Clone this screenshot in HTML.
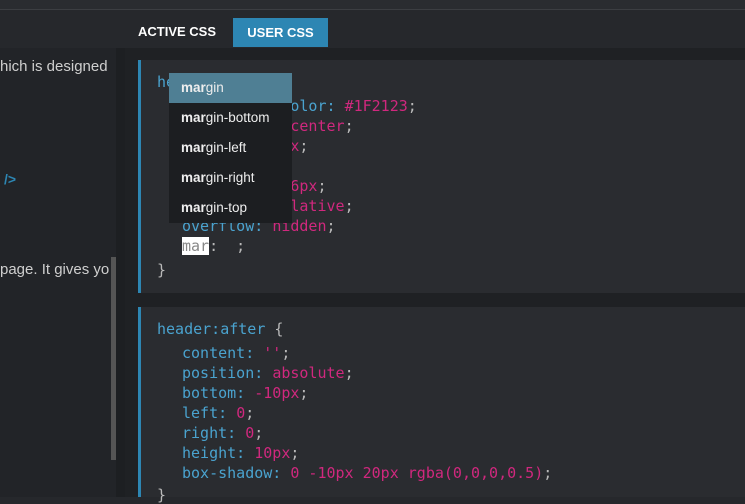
<!DOCTYPE html>
<html><head><meta charset="utf-8"><style>
*{margin:0;padding:0;box-sizing:border-box}
body{width:745px;height:497px;overflow:hidden;background:#26282c;position:relative;font-family:"Liberation Sans",sans-serif}
.a{position:absolute}
.code{font-family:"DejaVu Sans Mono","Liberation Mono",monospace;font-size:15px;white-space:pre;color:#4aa3cf;letter-spacing:0}
.code span.v{color:#d0287e}
.code span.p{color:#b9b9b9}
.dd div{height:30px;line-height:30px;padding-left:12px;color:#eee;font-size:13.5px}
.dd b{font-weight:bold}
</style></head><body>
<div class="a" style="left:0;top:0;width:745px;height:9px;background:#2a2c30"></div>
<div class="a" style="left:0;top:9px;width:745px;height:1px;background:#3c3e42"></div>
<div class="a" style="left:138px;top:24px;color:#fff;font-weight:bold;font-size:13px">ACTIVE CSS</div>
<div class="a" style="left:233px;top:18px;width:95px;height:29px;background:#2d86b3;color:#fff;font-weight:bold;font-size:13px;text-align:center;line-height:29px">USER CSS</div>
<!-- left panel -->
<div class="a" style="left:0;top:48px;width:110px;height:449px;background:#222428;overflow:hidden">
<div class="a" style="left:0;top:10px;color:#cfcfcf;font-size:15px;white-space:nowrap">hich is designed</div>
<div class="a" style="left:4px;top:123px;color:#2d86b3;font-size:14px;font-weight:bold">/&gt;</div>
<div class="a" style="left:0;top:213px;color:#cfcfcf;font-size:15px;white-space:nowrap">page. It gives you</div>
</div>
<div class="a" style="left:110px;top:48px;width:6px;height:449px;background:#222428"></div>
<div class="a" style="left:111px;top:257px;width:5px;height:203px;background:#555"></div>
<div class="a" style="left:116px;top:48px;width:9px;height:449px;background:#1d1f22"></div>
<!-- right panel -->
<div class="a" style="left:125px;top:48px;width:620px;height:449px;background:#1f2124"></div>
<div class="a" style="left:138px;top:60px;width:607px;height:233px;background:#2a2c30;border-left:3px solid #2d86b3"></div>
<div class="a" style="left:138px;top:307px;width:607px;height:190px;background:#2a2c30;border-left:3px solid #2d86b3"></div>
<div class="a code" style="left:157px;top:72px;line-height:20px">header {</div>
<div class="a code" style="left:182px;top:96px;line-height:20px">background-color: <span class="v">#1F2123</span><span class="p">;</span>
text-align: <span class="v">center</span><span class="p">;</span>
padding: <span class="v">20px</span><span class="p">;</span>
color: <span class="v">#fff</span><span class="p">;</span>
font-size: <span class="v">16px</span><span class="p">;</span>
position: <span class="v">relative</span><span class="p">;</span>
overflow: <span class="v">hidden</span><span class="p">;</span>
<span style="background:#fff;color:#888">mar</span><span class="p">:  ;</span></div>
<div class="a code p" style="left:157px;top:261px;color:#b9b9b9">}</div>
<div class="a code" style="left:157px;top:319px;line-height:20px">header:after <span class="p">{</span></div>
<div class="a code" style="left:182px;top:343px;line-height:20px">content: <span class="v">''</span><span class="p">;</span>
position: <span class="v">absolute</span><span class="p">;</span>
bottom: <span class="v">-10px</span><span class="p">;</span>
left: <span class="v">0</span><span class="p">;</span>
right: <span class="v">0</span><span class="p">;</span>
height: <span class="v">10px</span><span class="p">;</span>
box-shadow: <span class="v">0 -10px 20px rgba(0,0,0,0.5)</span><span class="p">;</span></div>
<div class="a code" style="left:157px;top:486px;color:#b9b9b9">}</div>
<!-- dropdown -->
<div class="a dd" style="left:169px;top:73px;width:123px;height:150px;background:#1c1e21">
<div style="background:#4f7f94"><b>mar</b>gin</div>
<div><b>mar</b>gin-bottom</div>
<div><b>mar</b>gin-left</div>
<div><b>mar</b>gin-right</div>
<div><b>mar</b>gin-top</div>
</div>
</body></html>
